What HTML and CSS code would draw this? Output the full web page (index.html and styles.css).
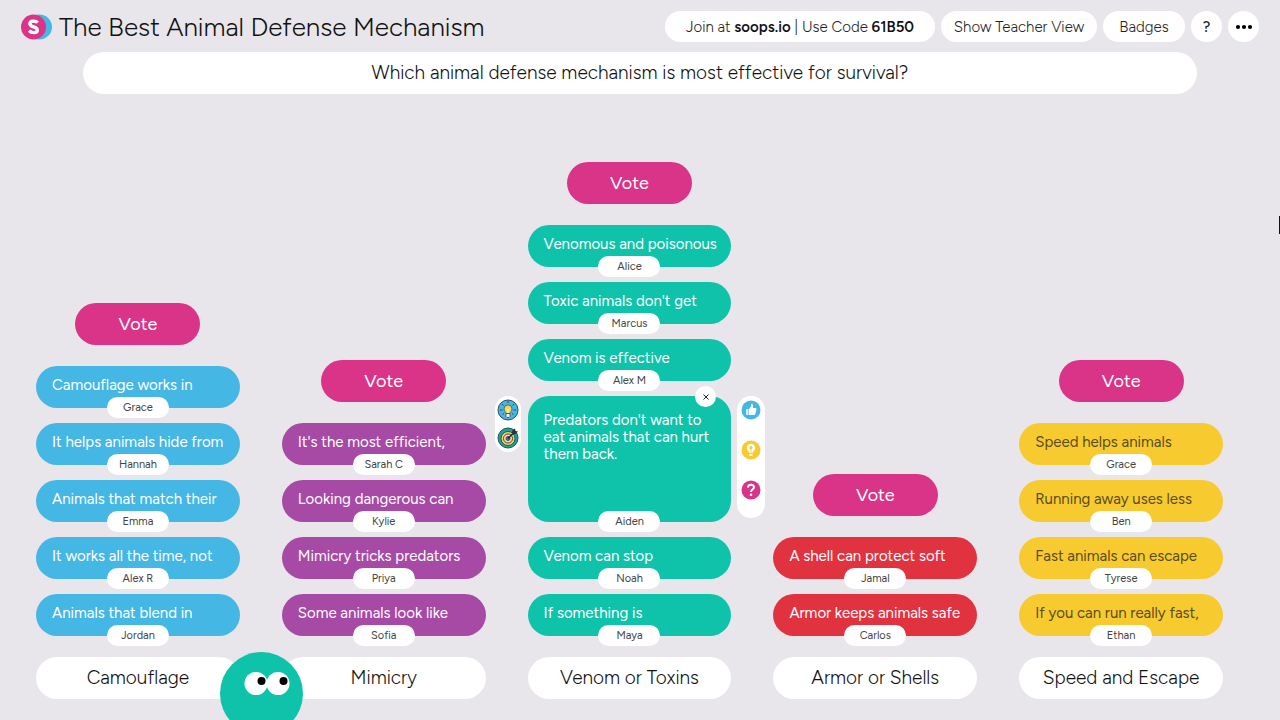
FILE: index.html
```
<!DOCTYPE html>
<html lang="en">
<head>
    <meta charset="UTF-8">
    <meta name="viewport" content="width=device-width, initial-scale=1.0">
    <title>The Best Animal Defense Mechanism</title>
    <link rel="stylesheet" href="styles.css">
</head>
<body>
    <header class="header">
        <svg class="logo" viewBox="0 0 32 26">
            <circle cx="18.5" cy="13" r="12.5" fill="#45b7e5"/>
            <circle cx="12.5" cy="13" r="12.5" fill="#d93487"/>
            <path d="M16.500 8.800C15 6.600 8.900 6.200 8.900 9.700c0 3.900 7.400 2.500 7.400 6.200 0 3.800-6.200 3.200-8.200.8" fill="none" stroke="#fff" stroke-width="3.400"/>
        </svg>
        <h1 class="title">The Best Animal Defense Mechanism</h1>
        <button class="topBtn join">Join at <b>soops.io</b> | Use Code <b>61B50</b></button>
        <button class="topBtn view">Show Teacher View</button>
        <button class="topBtn badges">Badges</button>
        <button class="topBtn round" aria-label="Help">?</button>
        <button class="topBtn round" aria-label="More">
            <svg width="18" height="6" viewBox="0 0 18 6"><circle cx="3" cy="3" r="2.1"/><circle cx="9" cy="3" r="2.1"/><circle cx="15" cy="3" r="2.1"/></svg>
        </button>
    </header>

    <h2 class="question">Which animal defense mechanism is most effective for survival?</h2>

    <main class="board">
        <section class="column blue">
            <button class="vote">Vote</button>
            <ul class="cards">
                <li class="card"><p>Camouflage works in</p><span class="name">Grace</span></li>
                <li class="card"><p>It helps animals hide from</p><span class="name">Hannah</span></li>
                <li class="card"><p>Animals that match their</p><span class="name">Emma</span></li>
                <li class="card"><p>It works all the time, not</p><span class="name">Alex R</span></li>
                <li class="card"><p>Animals that blend in</p><span class="name">Jordan</span></li>
            </ul>
            <h3 class="label">Camouflage</h3>
        </section>

        <section class="column purple">
            <button class="vote">Vote</button>
            <ul class="cards">
                <li class="card"><p>It's the most efficient,</p><span class="name">Sarah C</span></li>
                <li class="card"><p>Looking dangerous can</p><span class="name">Kylie</span></li>
                <li class="card"><p>Mimicry tricks predators</p><span class="name">Priya</span></li>
                <li class="card"><p>Some animals look like</p><span class="name">Sofia</span></li>
            </ul>
            <h3 class="label">Mimicry</h3>
        </section>

        <section class="column teal">
            <button class="vote">Vote</button>
            <ul class="cards">
                <li class="card"><p>Venomous and poisonous</p><span class="name">Alice</span></li>
                <li class="card"><p>Toxic animals don't get</p><span class="name">Marcus</span></li>
                <li class="card"><p>Venom is effective</p><span class="name">Alex M</span></li>
                <li class="card open">
                    <div class="side earned">
                        <svg width="22" height="22" viewBox="0 0 22 22">
                            <circle cx="11" cy="11" r="10" fill="#45b7e5" stroke="#34495e"/>
                            <path d="M11 2v2M5 5l1.500 1.500M17 5l-1.500 1.500M3 11h2.500M16.500 11H19M5.500 15.500l1.500-1M16.500 15.500l-1.500-1" stroke="#34495e"/>
                            <path d="M9 14.500c0-1.500-2-2.200-2-4.600a4 4 0 0 1 8 0c0 2.400-2 3.100-2 4.600z" fill="#f9d34c" stroke="#4b5255" stroke-width=".8"/>
                            <path d="M9.500 10l1.500 1 1.500-1M11 11v3" fill="none" stroke="#fff"/>
                            <path d="M9 14.500h4v3l-1 1h-2l-1-1z" fill="#eee" stroke="#34495e" stroke-width=".8"/>
                        </svg>
                        <svg width="22" height="22" viewBox="0 0 22 22">
                            <circle cx="11" cy="11" r="10" fill="#0fa994" stroke="#34495e"/>
                            <circle cx="11" cy="11.500" r="7" fill="#f9d34c" stroke="#34495e"/>
                            <circle cx="11" cy="11.500" r="4.500" fill="#f3e5a3" stroke="#34495e"/>
                            <circle cx="11" cy="11.500" r="2" fill="#d93487" stroke="#34495e"/>
                            <path d="M11 11.500l6-6" stroke="#222" stroke-width="1.300"/>
                            <path d="M15 6l.5-3L18 1.500l.5 2.500 2.500.5L18.500 7l-3 .5z" fill="#333"/>
                        </svg>
                    </div>
                    <button class="close" aria-label="Close">
                        <svg width="8" height="8" viewBox="0 0 8 8"><path d="M1.500 1.500l5 5M6.500 1.500l-5 5" stroke="#222"/></svg>
                    </button>
                    <p>Predators don't want to eat animals that can hurt them back.</p>
                    <span class="name">Aiden</span>
                    <div class="side give">
                        <button class="react" aria-label="Like">
                            <svg width="20" height="20" viewBox="0 0 20 20">
                                <circle cx="10" cy="10" r="9.500" fill="#45b7e5"/>
                                <path d="M5 9h2.500v6H5z" fill="#d5eefa"/>
                                <path d="M8 15V9l2-2.500V4.500c0-1.200 2-1 2 .8V8h2.500c1.200 0 1.200 1.200.8 2l-1 4c-.2.700-.6 1-1.300 1z" fill="#fff"/>
                            </svg>
                        </button>
                        <button class="react" aria-label="Good idea">
                            <svg width="20" height="20" viewBox="0 0 20 20">
                                <circle cx="10" cy="10" r="9.500" fill="#f7ca2f"/>
                                <path d="M8.300 13c0-2-2.500-2.400-2.500-5a4.200 4.200 0 0 1 8.400 0c0 2.600-2.500 3-2.500 5zM8.500 14h3v2h-3z" fill="#fff"/>
                                <path d="M10 5.500l1.800 2.300L10 10 8.200 7.800zM9.600 9.500h.8V13h-.8z" fill="#f7ca2f"/>
                            </svg>
                        </button>
                        <button class="react" aria-label="Question">
                            <svg width="20" height="20" viewBox="0 0 20 20">
                                <circle cx="10" cy="10" r="9.500" fill="#d93487"/>
                                <path d="M7 7.500c0-3.700 6-3.500 6-.3 0 2.200-3 2.100-3 4.800" fill="none" stroke="#fff" stroke-width="2"/>
                                <circle cx="10" cy="14.700" r="1.300" fill="#fff"/>
                            </svg>
                        </button>
                    </div>
                </li>
                <li class="card"><p>Venom can stop</p><span class="name">Noah</span></li>
                <li class="card"><p>If something is</p><span class="name">Maya</span></li>
            </ul>
            <h3 class="label">Venom or Toxins</h3>
        </section>

        <section class="column red">
            <button class="vote">Vote</button>
            <ul class="cards">
                <li class="card"><p>A shell can protect soft</p><span class="name">Jamal</span></li>
                <li class="card"><p>Armor keeps animals safe</p><span class="name">Carlos</span></li>
            </ul>
            <h3 class="label">Armor or Shells</h3>
        </section>

        <section class="column yellow">
            <button class="vote">Vote</button>
            <ul class="cards">
                <li class="card"><p>Speed helps animals</p><span class="name">Grace</span></li>
                <li class="card"><p>Running away uses less</p><span class="name">Ben</span></li>
                <li class="card"><p>Fast animals can escape</p><span class="name">Tyrese</span></li>
                <li class="card"><p>If you can run really fast,</p><span class="name">Ethan</span></li>
            </ul>
            <h3 class="label">Speed and Escape</h3>
        </section>
    </main>

    <!-- mascot peeking over the bottom edge -->
    <svg class="mascot" viewBox="0 0 84 68">
        <circle cx="42.500" cy="41.500" r="41.500" fill="#0fc3aa"/>
        <circle cx="37" cy="31.500" r="11.500" fill="#fff"/>
        <circle cx="59" cy="31.500" r="11.500" fill="#fff"/>
        <circle cx="42.500" cy="29" r="4"/>
        <circle cx="64.500" cy="29" r="4"/>
    </svg>
    <div class="handle"></div>
</body>
</html>
```
FILE: styles.css
```
*{
    padding: 0;
    margin: 0;
    box-sizing: border-box;
}
body{
    display: flex;
    flex-direction: column;
    position: relative;
    min-height: 100vh;
    overflow-x: hidden;
    background: #e8e6ea;
    color: #111;
    font-family: Figtree, Inter, sans-serif;
    font-weight: 300;
}
button{
    border: none;
    font: inherit;
    color: inherit;
    cursor: pointer;
}
svg{
    display: block;
}
.header{
    display: flex;
    align-items: center;
    gap: 6px;
    padding: 11px 21px 0 21px;
}
.logo{
    width: 32px;
    height: 26px;
}
.title{
    margin-right: auto;
    font-size: 26px;
    line-height: 30px;
    font-weight: 300;
    white-space: nowrap;
}
.topBtn{
    display: flex;
    align-items: center;
    justify-content: center;
    height: 31px;
    border-radius: 16px;
    background: #fff;
    color: #222;
    font-size: 15px;
    white-space: pre;
}
.topBtn b{
    color: #111;
    font-weight: 600;
}
.join{
    width: 270px;
}
.view{
    width: 156px;
}
.badges{
    width: 82px;
}
.round{
    width: 31px;
    font-weight: 500;
}
.question{
    margin: 10px 83px 0;
    border-radius: 21px;
    background: #fff;
    font-size: 19px;
    line-height: 42px;
    font-weight: 300;
    text-align: center;
}
.board{
    flex: 1;
    display: grid;
    grid-template-columns: repeat(5, minmax(0, 1fr));
    align-items: end;
    gap: 42px;
    padding: 21px 57px 21px 36px;
}
.column{
    display: flex;
    flex-direction: column;
    align-items: center;
    gap: 21px;
}
.vote{
    width: 125px;
    height: 42px;
    border-radius: 21px;
    background: #d93487;
    color: #fff;
    font-size: 18px;
    font-weight: 400;
}
.cards{
    display: flex;
    flex-direction: column;
    gap: 15px;
    width: 100%;
    list-style: none;
}
.card{
    position: relative;
    height: 42px;
    padding: 11px 16px;
    border-radius: 21px;
    color: #fff;
    font-size: 15px;
    line-height: 17px;
    font-weight: 400;
    white-space: nowrap;
}
.blue .card{
    background: #45b7e5;
}
.purple .card{
    background: #a74aa5;
}
.teal .card{
    background: #0fc3aa;
}
.red .card{
    background: #e1333f;
}
.yellow .card{
    background: #f7ca2f;
    color: #5a4d20;
}
.name{
    position: absolute;
    left: 50%;
    bottom: -10px;
    width: 62px;
    margin-left: -31px;
    border-radius: 11px;
    background: #fff;
    color: #444;
    font-size: 11px;
    line-height: 21px;
    text-align: center;
}
.open{
    height: 126px;
    padding-top: 16px;
    white-space: normal;
}
.close{
    position: absolute;
    top: -10px;
    right: 15px;
    display: flex;
    align-items: center;
    justify-content: center;
    width: 21px;
    height: 21px;
    border-radius: 50%;
    background: #fff;
}
.side{
    position: absolute;
    top: 0;
    display: flex;
    flex-direction: column;
    align-items: center;
    border-radius: 14px;
    background: #fff;
}
.earned{
    right: 100%;
    gap: 6px;
    margin-right: 7px;
    padding: 3px 2px;
}
.give{
    left: 100%;
    gap: 20px;
    margin-left: 6px;
    padding: 4px 4px 18px;
}
.react{
    background: none;
}
.label{
    width: 100%;
    border-radius: 21px;
    background: #fff;
    font-size: 19px;
    line-height: 42px;
    font-weight: 300;
    text-align: center;
    white-space: nowrap;
}
.mascot{
    position: absolute;
    left: 219px;
    bottom: 0;
    width: 84px;
    height: 68px;
}
.handle{
    position: absolute;
    right: 0;
    top: 216px;
    width: 1px;
    height: 18px;
    background: #111;
}
```
